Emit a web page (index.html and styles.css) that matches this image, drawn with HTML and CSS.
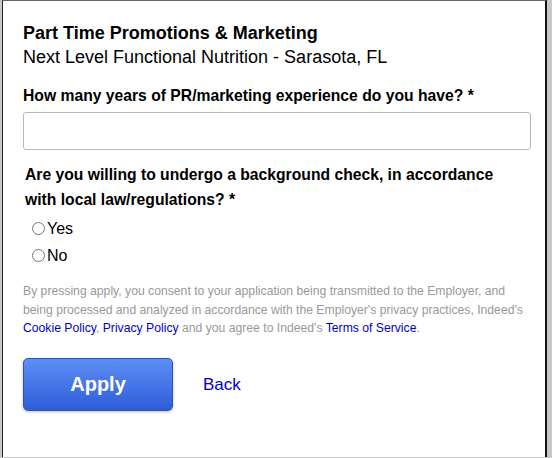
FILE: index.html
```html
<!DOCTYPE html>
<html lang="en">
<head>
    <meta charset="UTF-8">
    <meta name="viewport" content="width=device-width, initial-scale=1.0">
    <title>Apply - Part Time Promotions &amp; Marketing</title>
    <link rel="stylesheet" href="styles.css">
</head>
<body>
    <div class="backdrop">
        <div class="modal">
            <div class="job-header">
                <h2 class="job-title">Part Time Promotions &amp; Marketing</h2>
                <p class="job-company">Next Level Functional Nutrition - Sarasota, FL</p>
            </div>

            <div class="question">
                <label class="question-label" for="years">How many years of PR/marketing experience do you have? *</label>
                <input type="text" id="years" class="text-input">
            </div>

            <div class="question">
                <p class="question-label">Are you willing to undergo a background check, in accordance with local law/regulations? *</p>
                <div class="radio-group">
                    <label class="radio-row"><input type="radio" name="bgcheck" value="yes">Yes</label>
                    <label class="radio-row"><input type="radio" name="bgcheck" value="no">No</label>
                </div>
            </div>

            <p class="legal">
                By pressing apply, you consent to your application being transmitted to the Employer, and
                being processed and analyzed in accordance with the Employer's privacy practices, Indeed's
                <a href="#">Cookie Policy</a>, <a href="#">Privacy Policy</a> and you agree to Indeed's <a href="#">Terms of Service</a>.
            </p>

            <div class="actions">
                <button class="apply-btn">Apply</button>
                <a href="#" class="back-link">Back</a>
            </div>
        </div>
    </div>
</body>
</html>
```

FILE: styles.css
```css
html, body {
    margin: 0;
    padding: 0;
    height: 100%;
    background-color: #fff;
}
body {
    font-family: Arial, "Liberation Sans", sans-serif;
    color: #000;
}
.backdrop {
    height: 100%;
    padding-left: 2px;
    background-color: #c8c8c8;
    display: flex;
}
.modal {
    width: 545px;
    height: 457px;
    background-color: #fff;
    border-top: 1px solid #666;
    border-left: 1px solid #222;
    border-right: 2px solid #111;
    padding: 0 0 0 20px;
    box-sizing: border-box;
}
.job-header {
    padding-top: 21px;
}
.job-title {
    margin: 0;
    font-size: 18px;
    font-weight: bold;
    line-height: 22px;
}
.job-company {
    margin: 0;
    font-size: 18px;
    line-height: 27px;
}
.question {
    margin-top: 12px;
}
.question-label {
    display: block;
    margin: 0;
    font-size: 15.7px;
    font-weight: bold;
    line-height: 25px;
    width: 480px;
}
.text-input {
    display: block;
    width: 508px;
    height: 38px;
    margin-top: 4px;
    box-sizing: border-box;
    border: 1px solid #b8b8b8;
    border-radius: 3px;
    font-size: 15px;
}
.question + .question {
    margin-top: 12px;
}
.question + .question .question-label {
    padding-left: 2px;
}
.radio-group {
    margin-top: 3px;
}
.radio-row {
    display: flex;
    align-items: center;
    height: 27px;
    padding-left: 9px;
    font-size: 16px;
}
.radio-row input {
    margin: 0 2px 0 0;
    width: 13px;
    height: 13px;
}
.legal {
    margin: 13px 0 0 0;
    width: 510px;
    font-size: 12.2px;
    line-height: 18.7px;
    color: #999;
}
.legal a {
    color: #00c;
    text-decoration: none;
}
.actions {
    display: flex;
    align-items: center;
    gap: 30px;
    margin-top: 20px;
}
.apply-btn {
    width: 150px;
    height: 53px;
    border: 1px solid #2a4fc0;
    border-radius: 5px;
    background: linear-gradient(#5c8ff6, #2f5cd8);
    color: #fff;
    font-family: Arial, "Liberation Sans", sans-serif;
    font-size: 20px;
    font-weight: bold;
    box-shadow: 0 1px 3px rgba(0, 0, 0, 0.25);
    cursor: pointer;
}
.back-link {
    color: #00c;
    font-size: 17px;
    text-decoration: none;
}
```
